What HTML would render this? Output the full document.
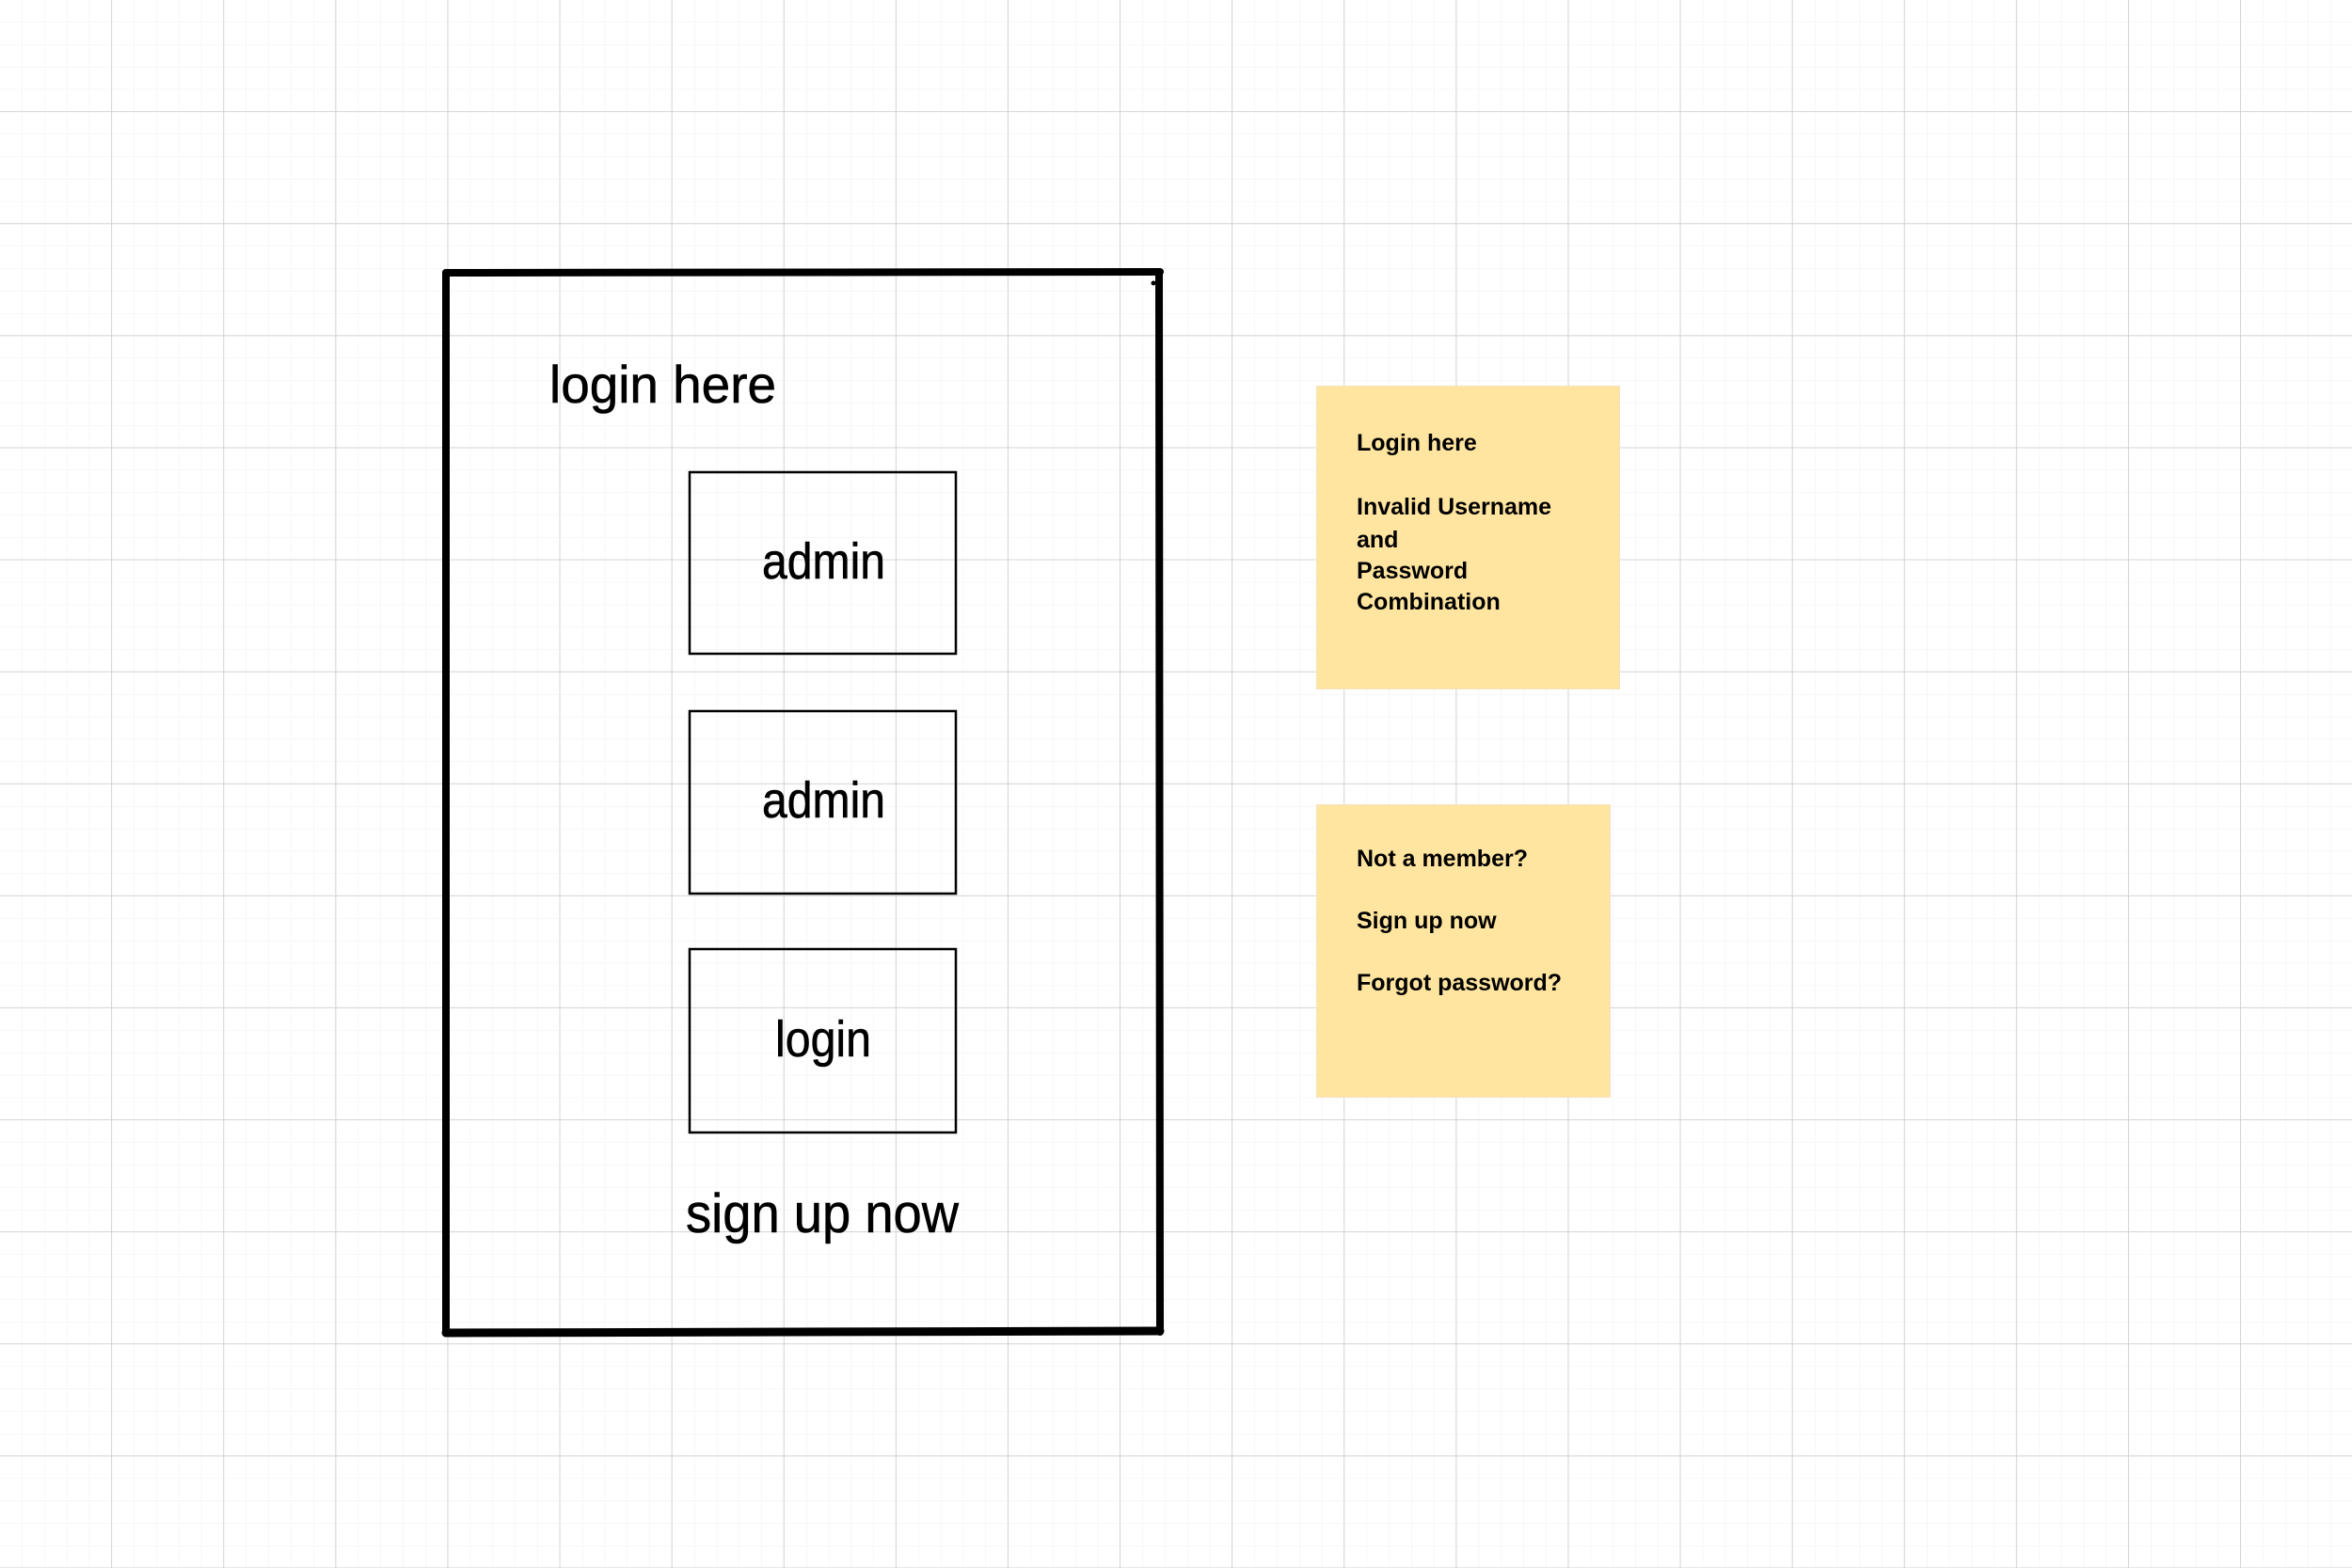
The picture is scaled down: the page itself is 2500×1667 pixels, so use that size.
<!DOCTYPE html>
<html><head><meta charset="utf-8"><style>
html,body{margin:0;padding:0;width:2500px;height:1667px;overflow:hidden;background:#fff}
svg{display:block}
.h{font-family:"Liberation Sans",sans-serif;fill:#000;stroke:#000;stroke-width:0.6}
.s{font-family:"Liberation Sans",sans-serif;font-weight:bold;font-size:25px;fill:#000}
</style></head><body>
<svg width="2500" height="1667" viewBox="0 0 2500 1667" xmlns="http://www.w3.org/2000/svg">
<defs>
<pattern id="minor" width="23.82" height="23.82" patternUnits="userSpaceOnUse">
<path d="M23.82 0V23.82M0 23.82H23.82" stroke="#efefef" stroke-width="1" fill="none"/>
</pattern>
<pattern id="major" width="119.1" height="119.1" patternUnits="userSpaceOnUse">
<path d="M119.1 0V119.1M0 119.1H119.1" stroke="#cfcfcf" stroke-width="1.8" fill="none"/>
</pattern>
</defs>
<rect width="2500" height="1667" fill="url(#minor)"/>
<rect width="2500" height="1667" fill="url(#major)"/>

<g stroke="#000" stroke-linecap="round" fill="none">
<path d="M474 290 L1233 289" stroke-width="8"/>
<path d="M474 1417 L1233 1415" stroke-width="9"/>
<path d="M474 290 L474 1417" stroke-width="8"/>
<path d="M1232 290 L1233 1416" stroke-width="8"/>
<g stroke-width="2.5">
<rect x="733" y="502" width="283" height="193"/>
<rect x="733" y="756" width="283" height="194"/>
<rect x="733" y="1009" width="283" height="195"/>
</g>
</g>
<circle cx="1226" cy="301" r="2.5" fill="#000"/>

<text class="h" x="584" y="428" font-size="56" textLength="241" lengthAdjust="spacingAndGlyphs">login here</text>
<text class="h" x="810" y="615" font-size="54" textLength="131" lengthAdjust="spacingAndGlyphs">admin</text>
<text class="h" x="810" y="869" font-size="54" textLength="131" lengthAdjust="spacingAndGlyphs">admin</text>
<text class="h" x="824" y="1123" font-size="54" textLength="102" lengthAdjust="spacingAndGlyphs">login</text>
<text class="h" x="729" y="1310" font-size="58" textLength="290" lengthAdjust="spacingAndGlyphs">sign up now</text>

<rect x="1399.5" y="410.5" width="322" height="322" fill="#ffe59f" stroke="#f2e3c0" stroke-width="1"/>
<text class="s" x="1442" y="479">Login here</text>
<text class="s" x="1442" y="547">Invalid Username</text>
<text class="s" x="1442" y="582">and</text>
<text class="s" x="1442" y="615">Password</text>
<text class="s" x="1442" y="648">Combination</text>

<rect x="1399.5" y="855.5" width="312" height="311" fill="#ffe59f" stroke="#f2e3c0" stroke-width="1"/>
<text class="s" x="1442" y="921">Not a member?</text>
<text class="s" x="1442" y="987">Sign up now</text>
<text class="s" x="1442" y="1053">Forgot password?</text>
</svg>
</body></html>
